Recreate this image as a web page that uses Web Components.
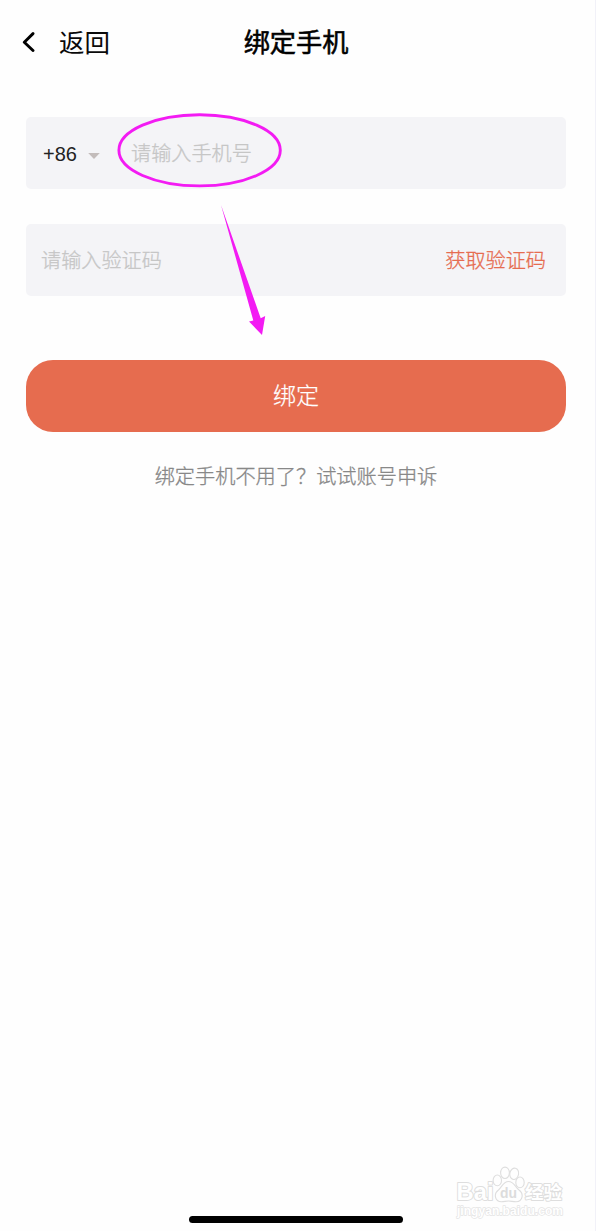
<!DOCTYPE html>
<html lang="zh-CN">
<head>
<meta charset="utf-8">
<title>绑定手机</title>
<style>
html,body{margin:0;height:100%}
body{background:#fefefe;font-family:"Liberation Sans","Noto Sans CJK SC",sans-serif}
</style>
</head>
<body>
<bind-page>
  <nav-header back="返回">绑定手机</nav-header>
  <form-field style="--pad:2px 20px 0 17px"><country-code slot="start">+86</country-code>请输入手机号</form-field>
  <form-field>请输入验证码<code-link slot="end">获取验证码</code-link></form-field>
  <submit-button>绑定</submit-button>
  <appeal-link>绑定手机不用了？试试账号申诉</appeal-link>
  <guide-marks slot="overlay"></guide-marks>
  <baidu-mark slot="overlay"></baidu-mark>
  <home-bar slot="foot"></home-bar>
</bind-page>
<script>
function define(name, markup) {
  const t = document.createElement('template');
  t.innerHTML = markup;
  customElements.define(name, class extends HTMLElement {
    constructor() {
      super();
      const root = this.attachShadow({mode: 'open'});
      root.append(t.content.cloneNode(true));
    }
    connectedCallback() {
      const b = this.shadowRoot.querySelector('[data-back]');
      if (b) b.textContent = this.getAttribute('back');
    }
  });
}
define('bind-page', `
<style>
:host{display:flex;flex-direction:column;position:relative;box-sizing:border-box;width:100%;height:1231px;overflow:hidden;border-right:1px solid #f1f1f8}
main{flex:1;display:flex;flex-direction:column}
</style>
<main><slot></slot></main><slot name="foot"></slot><slot name="overlay"></slot>`);
define('nav-header', `
<style>
:host{display:grid;grid-template-columns:1fr auto 1fr;align-items:center;height:84px;padding:0 0 0 22px;margin-right:25px;color:#0a0a0a}
.back{display:flex;align-items:center;gap:24px;font-size:25.5px;line-height:36px}
.back span,.title{padding-top:2px}
svg{display:block;width:13px;height:20px}
.title{font-size:26.2px;font-weight:400;-webkit-text-stroke:.55px currentColor;line-height:36px;color:#000}
</style>
<div class="back"><svg viewBox="0 0 13 20"><path d="M11 1.6 2.3 10.2 11 18.5" fill="none" stroke="#000" stroke-width="2.9" stroke-linecap="round" stroke-linejoin="round"/></svg><span data-back></span></div>
<div class="title"><slot></slot></div>`);
define('form-field', `
<style>
:host{display:flex;align-items:center;justify-content:space-between;height:72px;margin:33px 29px 2px 26px;padding:var(--pad,2px 20px 0 15px);box-sizing:border-box;background:#f4f4f7;border-radius:5px;color:#c6c6c6;font-size:20.15px;font-weight:300;-webkit-text-stroke:.3px currentColor;line-height:28px}
.left{display:flex;align-items:center}
</style>
<div class="left"><slot name="start"></slot><span><slot></slot></span></div><slot name="end"></slot>`);
define('country-code', `
<style>
:host{display:flex;align-items:center;color:#222;width:88px;font-size:20px;-webkit-text-stroke:0}
svg{width:12px;height:6px;margin:4px 0 0 11px}
</style>
<slot></slot><svg viewBox="0 0 12 6"><path d="M.2 0h11.6L6 6z" fill="#c3bcbb"/></svg>`);
define('code-link', `<style>:host{display:block;color:#e66c50;-webkit-text-stroke:.3px currentColor}</style><slot></slot>`);
define('submit-button', `
<style>
:host{display:flex;align-items:center;justify-content:center;height:72px;margin:62px 29px 0 26px;background:#e66c4f;border-radius:27px;color:#fff;font-size:23px;font-weight:300;-webkit-text-stroke:.25px currentColor;line-height:32px}
</style><slot></slot>`);
define('appeal-link', `
<style>:host{display:block;margin:31px 3px 0 0;text-align:center;color:#888;font-size:20.2px;font-weight:300;-webkit-text-stroke:.3px currentColor;line-height:28px}</style><slot></slot>`);
define('home-bar', `
<style>:host{display:block;width:214px;height:7px;border-radius:4px;background:#000;margin:0 auto 8px 189px}</style>`);
define('guide-marks', `
<style>:host{position:absolute;left:110px;top:105px;width:180px;height:240px;pointer-events:none}svg{display:block}</style>
<svg width="180" height="240" viewBox="110 105 180 240"><ellipse cx="199.6" cy="150.3" rx="80.7" ry="35.6" fill="none" stroke="#f31bf3" stroke-width="2.9"/><path d="M221 205 260.7 318.2 265.2 316 262 335 249 321.5 253.3 320.4Z" fill="#f31bf3"/></svg>`);
define('baidu-mark', `
<style>
:host{position:absolute;left:450px;top:1160px;width:125px;height:62px}
svg{display:block}
text{fill:#fff;stroke:#dedede;stroke-width:2px;paint-order:stroke;stroke-linejoin:round;font-family:"Liberation Sans","Noto Sans CJK SC",sans-serif;font-weight:700}
.paw{fill:#fefefe;stroke:#dedede;stroke-width:1.1}
</style>
<svg width="125" height="62" viewBox="450 1160 125 62">
<text x="456.5" y="1200.3" font-size="24.5" textLength="37" lengthAdjust="spacingAndGlyphs">Bai</text>
<g class="paw"><ellipse cx="497.3" cy="1180.4" rx="4.2" ry="5.4"/><ellipse cx="505" cy="1172.8" rx="4.4" ry="5.7"/><ellipse cx="514.2" cy="1173.8" rx="4.4" ry="5.7" transform="rotate(12 514.2 1173.8)"/><ellipse cx="520" cy="1182.4" rx="4.2" ry="5.4"/>
<path d="M508.5 1181.5C503 1181.5 502 1187 498.5 1190C493.5 1193.5 494.5 1201.8 501.5 1201.8C504 1201.8 506 1201 508.5 1201S513 1201.8 516 1201.8C523 1201.8 524 1193.5 519 1190C515 1187 514 1181.5 508.5 1181.5Z"/></g>
<text x="500" y="1198.2" font-size="15" textLength="17" lengthAdjust="spacingAndGlyphs" style="fill:#dcdcdc;stroke:none">du</text>
<text x="525" y="1199" font-size="18.5" textLength="37" lengthAdjust="spacingAndGlyphs">经验</text>
<text x="457" y="1214.5" font-size="12.5" textLength="106" lengthAdjust="spacingAndGlyphs" style="stroke-width:1.4px;stroke:#e4e4e4">jingyan.baidu.com</text>
</svg>`);
</script>
</body>
</html>
